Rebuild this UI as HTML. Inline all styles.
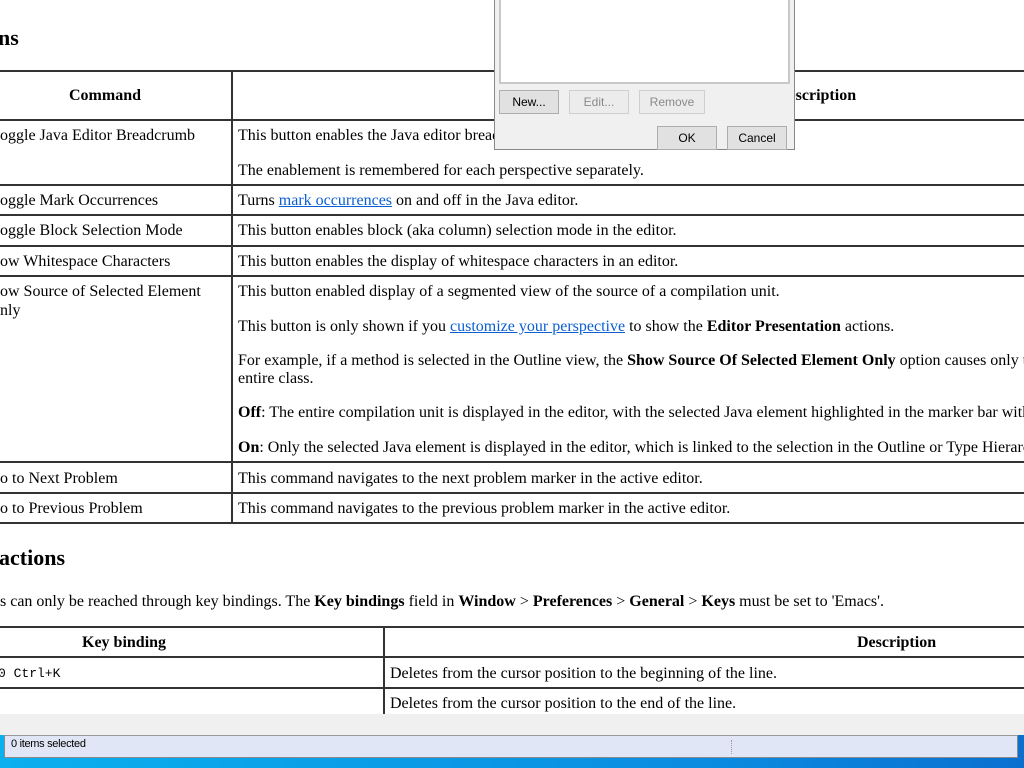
<!DOCTYPE html>
<html><head><meta charset="utf-8"><style>
html,body{margin:0;padding:0;width:1024px;height:768px;overflow:hidden;background:#fff;position:relative;font-family:"Liberation Serif",serif;font-size:16px;color:#000}
.t{position:absolute;white-space:nowrap;line-height:18px}
.h{position:absolute;white-space:nowrap;font-weight:bold;font-size:22px;line-height:26px}
.hl{position:absolute;background:#333;height:2px}
.vl{position:absolute;background:#333;width:2px}
a{color:#0b5fd1;text-decoration:underline}
.btn{position:absolute;box-sizing:border-box;border:1px solid #adadad;background:#e1e1e1;font-family:"Liberation Sans",sans-serif;font-size:12px;text-align:center;color:#000}
.dis{border-color:#cfcfcf;background:#ececec;color:#8a8a8a}
</style></head><body>
<div class="h" style="left:-2px;top:25px">ns</div>
<div class="hl" style="left:0;top:70px;width:1024px"></div>
<div class="hl" style="left:0;top:119px;width:1024px"></div>
<div class="hl" style="left:0;top:184px;width:1024px"></div>
<div class="hl" style="left:0;top:214px;width:1024px"></div>
<div class="hl" style="left:0;top:245px;width:1024px"></div>
<div class="hl" style="left:0;top:275px;width:1024px"></div>
<div class="hl" style="left:0;top:461px;width:1024px"></div>
<div class="hl" style="left:0;top:492px;width:1024px"></div>
<div class="hl" style="left:0;top:522px;width:1024px"></div>
<div class="vl" style="left:231px;top:70px;height:454px"></div>
<div class="t" style="left:69px;top:87px;font-weight:bold">Command</div>
<div class="t" style="left:777px;top:87px;font-weight:bold">Description</div>
<div class="t" style="left:0;top:127px">oggle Java Editor Breadcrumb</div>
<div class="t" style="left:238px;top:127px">This button enables the Java editor breadcrumb.</div>
<div class="t" style="left:238px;top:162px">The enablement is remembered for each perspective separately.</div>
<div class="t" style="left:0;top:192px">oggle Mark Occurrences</div>
<div class="t" style="left:238px;top:192px">Turns <a>mark occurrences</a> on and off in the Java editor.</div>
<div class="t" style="left:0;top:222px">oggle Block Selection Mode</div>
<div class="t" style="left:238px;top:222px">This button enables block (aka column) selection mode in the editor.</div>
<div class="t" style="left:0;top:253px">ow Whitespace Characters</div>
<div class="t" style="left:238px;top:253px">This button enables the display of whitespace characters in an editor.</div>
<div class="t" style="left:0;top:283px">ow Source of Selected Element</div>
<div class="t" style="left:0;top:302px">nly</div>
<div class="t" style="left:238px;top:283px">This button enabled display of a segmented view of the source of a compilation unit.</div>
<div class="t" style="left:238px;top:318px">This button is only shown if you <a>customize your perspective</a> to show the <b>Editor Presentation</b> actions.</div>
<div class="t" style="left:238px;top:352px">For example, if a method is selected in the Outline view, the <b>Show Source Of Selected Element Only</b> option causes only this method to be displayed in the editor, as opposed to the</div>
<div class="t" style="left:238px;top:370px">entire class.</div>
<div class="t" style="left:238px;top:404px"><b>Off</b>: The entire compilation unit is displayed in the editor, with the selected Java element highlighted in the marker bar with a range indicator.</div>
<div class="t" style="left:238px;top:439px"><b>On</b>: Only the selected Java element is displayed in the editor, which is linked to the selection in the Outline or Type Hierarchy view.</div>
<div class="t" style="left:0;top:470px">o to Next Problem</div>
<div class="t" style="left:238px;top:470px">This command navigates to the next problem marker in the active editor.</div>
<div class="t" style="left:0;top:500px">o to Previous Problem</div>
<div class="t" style="left:238px;top:500px">This command navigates to the previous problem marker in the active editor.</div>

<div class="h" style="left:-1px;top:545px">actions</div>
<div class="t" style="left:0;top:593px">s can only be reached through key bindings. The <b>Key bindings</b> field in <b>Window</b> &gt; <b>Preferences</b> &gt; <b>General</b> &gt; <b>Keys</b> must be set to 'Emacs'.</div>
<div class="hl" style="left:0;top:626px;width:1024px"></div>
<div class="hl" style="left:0;top:656px;width:1024px"></div>
<div class="hl" style="left:0;top:687px;width:1024px"></div>
<div class="vl" style="left:383px;top:626px;height:90px"></div>
<div class="t" style="left:82px;top:634px;font-weight:bold">Key binding</div>
<div class="t" style="left:857px;top:634px;font-weight:bold">Description</div>
<div class="t" style="left:-2px;top:665px;font-family:'Liberation Mono',monospace;font-size:13px">0 Ctrl+K</div>
<div class="t" style="left:390px;top:665px">Deletes from the cursor position to the beginning of the line.</div>
<div class="t" style="left:390px;top:695px">Deletes from the cursor position to the end of the line.</div>

<div style="position:absolute;left:0;top:714px;width:1024px;height:22px;background:#f0f0f0"></div>
<div style="position:absolute;left:0;top:735px;width:1024px;height:33px;background:linear-gradient(90deg,#0ab0ef,#0a8be0 70%,#0a70d0)"></div>
<div style="position:absolute;left:4px;top:735px;width:1014px;height:23px;background:#e0e6f5;border:1px solid #8a8a8a;box-sizing:border-box;border-top-color:#999"></div>
<div style="position:absolute;left:11px;top:738px;font-family:'Liberation Sans Narrow','Liberation Sans',sans-serif;font-size:11px;letter-spacing:-0.3px">0 items selected</div>
<div style="position:absolute;left:731px;top:740px;width:0;height:14px;border-left:1px dotted #999"></div>

<div style="position:absolute;left:494px;top:-2px;width:301px;height:152px;background:#f0f0f0;border:1px solid #888;box-sizing:border-box"></div>
<div style="position:absolute;left:499px;top:-2px;width:291px;height:86px;background:#fff;border:2px solid #c8c8c8;box-sizing:border-box"></div>
<div class="btn" style="left:499px;top:90px;width:60px;height:24px;line-height:22px">New...</div>
<div class="btn dis" style="left:569px;top:90px;width:60px;height:24px;line-height:22px">Edit...</div>
<div class="btn dis" style="left:639px;top:90px;width:66px;height:24px;line-height:22px">Remove</div>
<div class="btn" style="left:657px;top:126px;width:60px;height:24px;line-height:22px">OK</div>
<div class="btn" style="left:727px;top:126px;width:60px;height:24px;line-height:22px">Cancel</div>
</body></html>
